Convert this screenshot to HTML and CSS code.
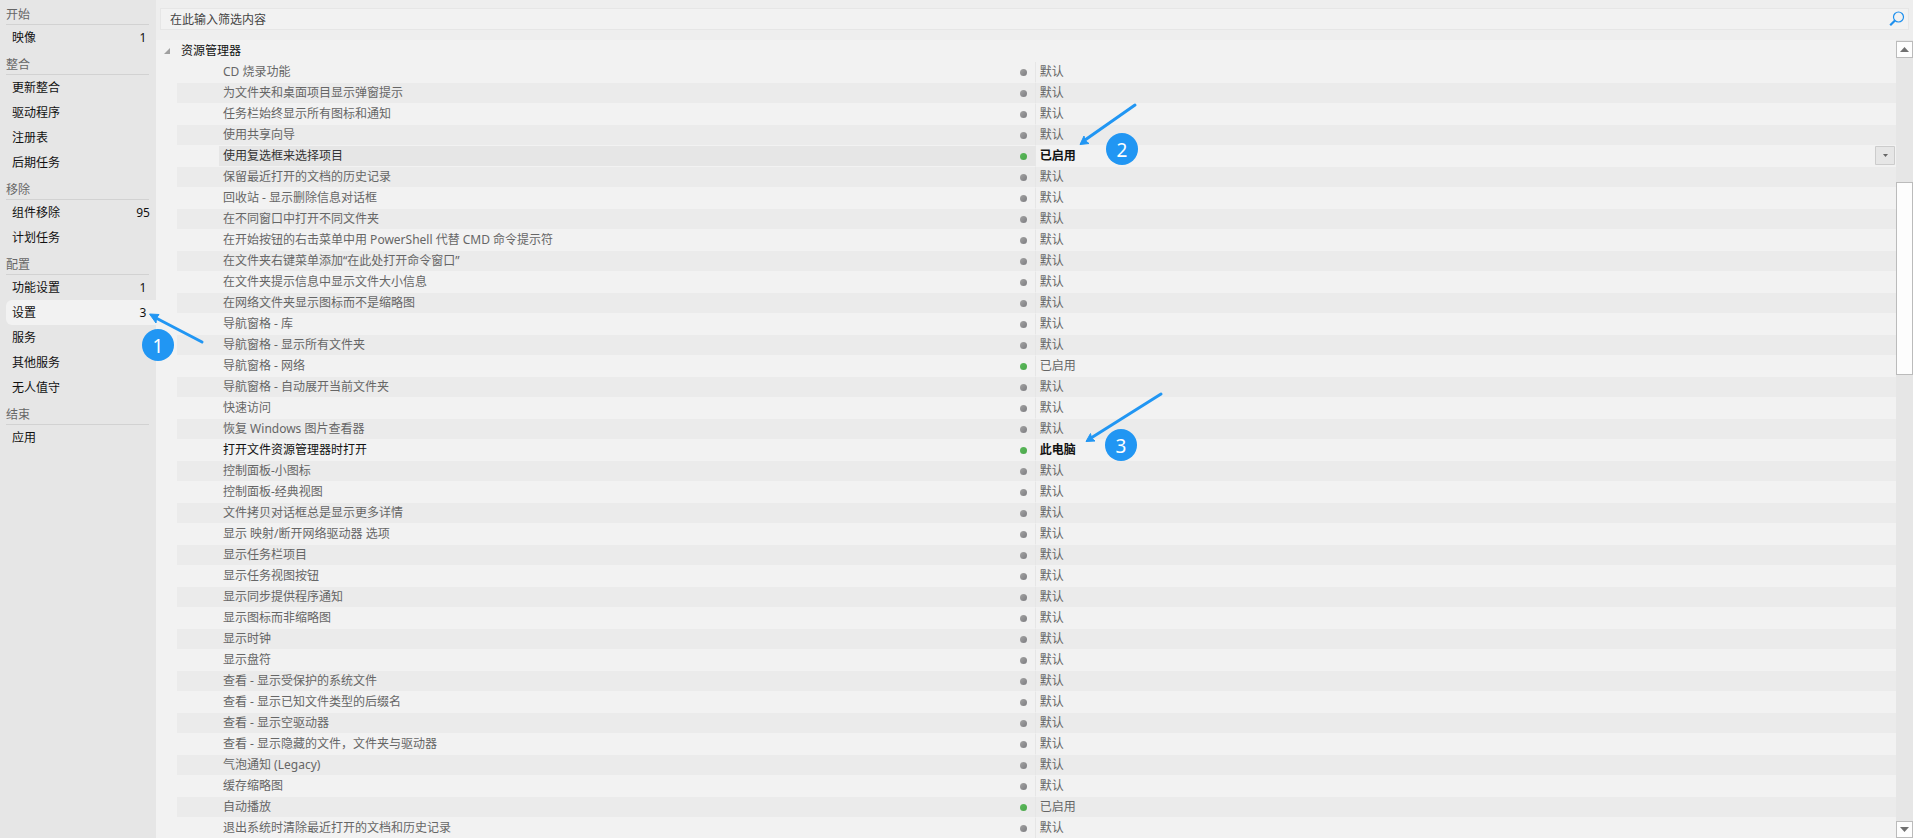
FILE: index.html
```html
<!DOCTYPE html>
<html lang="zh-CN">
<head>
<meta charset="utf-8">
<title>设置</title>
<link rel="stylesheet" href="styles.css">
</head>
<body>
<div class="app">
  <nav class="sidebar">
    <h2 class="group">开始</h2>
    <a class="item" href="#"><span>映像</span><span class="count">1</span></a>
    <h2 class="group">整合</h2>
    <a class="item" href="#">更新整合</a>
    <a class="item" href="#">驱动程序</a>
    <a class="item" href="#">注册表</a>
    <a class="item" href="#">后期任务</a>
    <h2 class="group">移除</h2>
    <a class="item" href="#"><span>组件移除</span><span class="count">95</span></a>
    <a class="item" href="#">计划任务</a>
    <h2 class="group">配置</h2>
    <a class="item" href="#"><span>功能设置</span><span class="count">1</span></a>
    <a class="item active" href="#" aria-current="page"><span>设置</span><span class="count">3</span></a>
    <a class="item" href="#">服务</a>
    <a class="item" href="#">其他服务</a>
    <a class="item" href="#">无人值守</a>
    <h2 class="group">结束</h2>
    <a class="item" href="#">应用</a>
  </nav>

  <main class="main">
    <form class="search">
      <input class="search-input" type="text" placeholder="在此输入筛选内容" aria-label="在此输入筛选内容">
      <button class="search-button" type="button" aria-label="搜索">
        <svg width="16" height="16" viewBox="0 0 16 16" fill="none" stroke="#1e90ee"><circle cx="9.5" cy="6" r="5" stroke-width="1.2"/><path d="M6 9.5 1.2 14.3" stroke-width="2.2"/></svg>
      </button>
    </form>

    <div class="content">
      <div class="list">
        <button class="section" type="button" aria-expanded="true">
          <svg width="6" height="6" viewBox="0 0 6 6"><path d="M6 0V6H0Z" fill="#a0a0a0"/></svg>
          <span>资源管理器</span>
        </button>
        <table class="settings">
          <colgroup><col class="col-gutter"><col><col class="col-dot"><col class="col-value"></colgroup>
          <tbody>
            <tr><td></td><td>CD 烧录功能</td><td><i class="dot"></i></td><td>默认</td></tr>
            <tr><td></td><td>为文件夹和桌面项目显示弹窗提示</td><td><i class="dot"></i></td><td>默认</td></tr>
            <tr><td></td><td>任务栏始终显示所有图标和通知</td><td><i class="dot"></i></td><td>默认</td></tr>
            <tr><td></td><td>使用共享向导</td><td><i class="dot"></i></td><td>默认</td></tr>
            <tr class="selected"><td></td><td><label for="checkboxes">使用复选框来选择项目</label></td><td><i class="dot on"></i></td><td><select class="value-select" id="checkboxes"><option>已启用</option><option>默认</option></select></td></tr>
            <tr><td></td><td>保留最近打开的文档的历史记录</td><td><i class="dot"></i></td><td>默认</td></tr>
            <tr><td></td><td>回收站 - 显示删除信息对话框</td><td><i class="dot"></i></td><td>默认</td></tr>
            <tr><td></td><td>在不同窗口中打开不同文件夹</td><td><i class="dot"></i></td><td>默认</td></tr>
            <tr><td></td><td>在开始按钮的右击菜单中用 PowerShell 代替 CMD 命令提示符</td><td><i class="dot"></i></td><td>默认</td></tr>
            <tr><td></td><td>在文件夹右键菜单添加“在此处打开命令窗口”</td><td><i class="dot"></i></td><td>默认</td></tr>
            <tr><td></td><td>在文件夹提示信息中显示文件大小信息</td><td><i class="dot"></i></td><td>默认</td></tr>
            <tr><td></td><td>在网络文件夹显示图标而不是缩略图</td><td><i class="dot"></i></td><td>默认</td></tr>
            <tr><td></td><td>导航窗格 - 库</td><td><i class="dot"></i></td><td>默认</td></tr>
            <tr><td></td><td>导航窗格 - 显示所有文件夹</td><td><i class="dot"></i></td><td>默认</td></tr>
            <tr><td></td><td>导航窗格 - 网络</td><td><i class="dot on"></i></td><td>已启用</td></tr>
            <tr><td></td><td>导航窗格 - 自动展开当前文件夹</td><td><i class="dot"></i></td><td>默认</td></tr>
            <tr><td></td><td>快速访问</td><td><i class="dot"></i></td><td>默认</td></tr>
            <tr><td></td><td>恢复 Windows 图片查看器</td><td><i class="dot"></i></td><td>默认</td></tr>
            <tr class="changed"><td></td><td>打开文件资源管理器时打开</td><td><i class="dot on"></i></td><td>此电脑</td></tr>
            <tr><td></td><td>控制面板-小图标</td><td><i class="dot"></i></td><td>默认</td></tr>
            <tr><td></td><td>控制面板-经典视图</td><td><i class="dot"></i></td><td>默认</td></tr>
            <tr><td></td><td>文件拷贝对话框总是显示更多详情</td><td><i class="dot"></i></td><td>默认</td></tr>
            <tr><td></td><td>显示 映射/断开网络驱动器 选项</td><td><i class="dot"></i></td><td>默认</td></tr>
            <tr><td></td><td>显示任务栏项目</td><td><i class="dot"></i></td><td>默认</td></tr>
            <tr><td></td><td>显示任务视图按钮</td><td><i class="dot"></i></td><td>默认</td></tr>
            <tr><td></td><td>显示同步提供程序通知</td><td><i class="dot"></i></td><td>默认</td></tr>
            <tr><td></td><td>显示图标而非缩略图</td><td><i class="dot"></i></td><td>默认</td></tr>
            <tr><td></td><td>显示时钟</td><td><i class="dot"></i></td><td>默认</td></tr>
            <tr><td></td><td>显示盘符</td><td><i class="dot"></i></td><td>默认</td></tr>
            <tr><td></td><td>查看 - 显示受保护的系统文件</td><td><i class="dot"></i></td><td>默认</td></tr>
            <tr><td></td><td>查看 - 显示已知文件类型的后缀名</td><td><i class="dot"></i></td><td>默认</td></tr>
            <tr><td></td><td>查看 - 显示空驱动器</td><td><i class="dot"></i></td><td>默认</td></tr>
            <tr><td></td><td>查看 - 显示隐藏的文件，文件夹与驱动器</td><td><i class="dot"></i></td><td>默认</td></tr>
            <tr><td></td><td>气泡通知 (Legacy)</td><td><i class="dot"></i></td><td>默认</td></tr>
            <tr><td></td><td>缓存缩略图</td><td><i class="dot"></i></td><td>默认</td></tr>
            <tr><td></td><td>自动播放</td><td><i class="dot on"></i></td><td>已启用</td></tr>
            <tr><td></td><td>退出系统时清除最近打开的文档和历史记录</td><td><i class="dot"></i></td><td>默认</td></tr>
          </tbody>
        </table>
      </div>
      <div class="scrollbar">
        <button class="scroll-button" type="button" aria-label="向上滚动"><svg width="9" height="5" viewBox="0 0 9 5"><path d="M4.5 0 9 5H0Z" fill="#707070"/></svg></button>
        <div class="track"><div class="thumb"></div></div>
        <button class="scroll-button" type="button" aria-label="向下滚动"><svg width="9" height="5" viewBox="0 0 9 5"><path d="M4.5 5 9 0H0Z" fill="#707070"/></svg></button>
      </div>
    </div>
  </main>

  <svg class="arrow arrow-1" width="60" height="36" viewBox="0 0 60 36"><path class="shaft" d="M55 31 9 7"/><path class="head" d="M2.500 3 12 3.500 9.500 7 9 12Z"/></svg>
  <span class="step step-1">1</span>
  <svg class="arrow arrow-2" width="64" height="48" viewBox="0 0 64 48"><path class="shaft" d="M59 5 9 40"/><path class="head" d="M4 44.500 8 36 9 40.500 13 43.500Z"/></svg>
  <span class="step step-2">2</span>
  <svg class="arrow arrow-3" width="84" height="56" viewBox="0 0 84 56"><path class="shaft" d="M79 4 9 48"/><path class="head" d="M4 51.500 8.500 43.500 9.500 48 13 51Z"/></svg>
  <span class="step step-3">3</span>
</div>
</body>
</html>
```
FILE: styles.css
```css
* {
  box-sizing: border-box;
}

body {
  margin: 0;
  background: #eeeeee;
  color: #111111;
  font: 12px/20px "Noto Sans", "Noto Sans CJK SC", sans-serif;
}

button,
input,
select {
  margin: 0;
  padding: 0;
  border: 0;
  background: none;
  color: inherit;
  font: inherit;
}

.app {
  position: relative;
  display: flex;
  height: 100vh;
  overflow: hidden;
}

/* Sidebar */
.sidebar {
  flex: none;
  width: 156px;
  padding-left: 6px;
  background: #e6e6e6;
}

.group {
  height: 25px;
  margin: 0 7px 0 0;
  padding-top: 5px;
  border-bottom: 1px solid #d2d2d2;
  color: #666666;
  font-size: 12px;
  font-weight: 400;
  line-height: 19px;
}

.item {
  display: flex;
  justify-content: space-between;
  height: 25px;
  padding: 3px 3px 0 6px;
  color: #111111;
  text-decoration: none;
}

.item.active {
  border-radius: 6px 0 0 6px;
  background: #f2f2f2;
}

.count {
  width: 20px;
  text-align: center;
}

/* Filter box */
.main {
  display: flex;
  flex: 1;
  flex-direction: column;
  min-width: 0;
}

.search {
  display: flex;
  flex: none;
  height: 22px;
  margin: 8px 4px 10px;
  border: 1px solid #e6e6e6;
  background: #f2f2f2;
}

.search-input {
  flex: 1;
  padding: 2px 0 0 9px;
  outline: 0;
}

.search-input::placeholder {
  color: #444444;
  opacity: 1;
}

.search-button {
  display: flex;
  width: 19px;
  padding-top: 2px;
}

/* Settings list */
.content {
  display: flex;
  flex: 1;
  min-height: 0;
  background: #f2f2f2;
}

.list {
  flex: 1;
  overflow: hidden;
}

.section {
  display: flex;
  align-items: center;
  gap: 11px;
  height: 22px;
  padding-left: 8px;
}

.settings {
  width: 100%;
  border-collapse: separate;
  border-spacing: 0;
  table-layout: fixed;
  color: #666666;
}

.col-gutter {
  width: 21px;
}

.col-dot {
  width: 15px;
}

.col-value {
  width: 49.5%;
}

.settings td {
  height: 21px;
  padding: 0;
  border-bottom: 1px solid #f2f2f2;
  white-space: nowrap;
}

.settings td:nth-child(2) {
  padding-left: 46px;
}

.settings td:nth-child(4) {
  padding-left: 4px;
  border-left: 1px solid #e6e6e6;
}

.settings tr:nth-child(even) td:not(:first-child) {
  background: #ebebeb;
}

.settings .selected td:nth-child(2) {
  background: linear-gradient(to right, transparent 42px, #e6e6e6 42px);
  color: #333333;
}

.settings .selected td:nth-child(3) {
  background: #e6e6e6;
}

.settings .changed td {
  color: #111111;
}

.settings .changed td:last-child {
  font-weight: 700;
}

.dot {
  display: block;
  width: 7px;
  height: 7px;
  border-radius: 50%;
  background: linear-gradient(135deg, #a4a4a4, #7c7c80);
}

.dot.on {
  background: linear-gradient(135deg, #5cba5c, #4aa64a);
}

.value-select {
  display: block;
  width: calc(100% - 1px);
  height: 20px;
  appearance: none;
  background:
    url("data:image/svg+xml,%3Csvg xmlns='http://www.w3.org/2000/svg' width='20' height='19'%3E%3Cpath d='M.5.5h19v18H.5z' fill='%23e6e6e6' stroke='%23cccccc'/%3E%3Cpath d='M8 8h5l-2.500 3z' fill='%23666666'/%3E%3C/svg%3E")
    right top no-repeat;
  color: #111111;
  font-weight: 700;
  line-height: 20px;
}

/* Scrollbar */
.scrollbar {
  display: flex;
  flex: none;
  flex-direction: column;
  width: 17px;
  padding-top: 1px;
  background: #e6e6e6;
}

.scroll-button {
  display: flex;
  flex: none;
  align-items: center;
  justify-content: center;
  height: 17px;
  border: 1px solid #bbbbbb;
  background: #fdfdfd;
}

.track {
  flex: 1;
  padding-top: 124px;
}

.thumb {
  height: 193px;
  border: 1px solid #bbbbbb;
  background: #fdfdfd;
}

/* Numbered callouts over the window */
.arrow {
  position: absolute;
}

.shaft {
  fill: none;
  stroke: #2196f3;
  stroke-width: 3;
  stroke-linecap: round;
}

.head {
  fill: #2196f3;
  stroke: #2196f3;
}

.step {
  position: absolute;
  width: 32px;
  height: 32px;
  border-radius: 50%;
  background: #2196f3;
  color: #ffffff;
  font-size: 19px;
  line-height: 34px;
  text-align: center;
}

.arrow-1 {
  left: 147px;
  top: 311px;
}

.step-1 {
  left: 142px;
  top: 329px;
}

.arrow-2 {
  left: 1076px;
  top: 100px;
}

.step-2 {
  left: 1106px;
  top: 133px;
}

.arrow-3 {
  left: 1082px;
  top: 390px;
}

.step-3 {
  left: 1105px;
  top: 429px;
}
```
